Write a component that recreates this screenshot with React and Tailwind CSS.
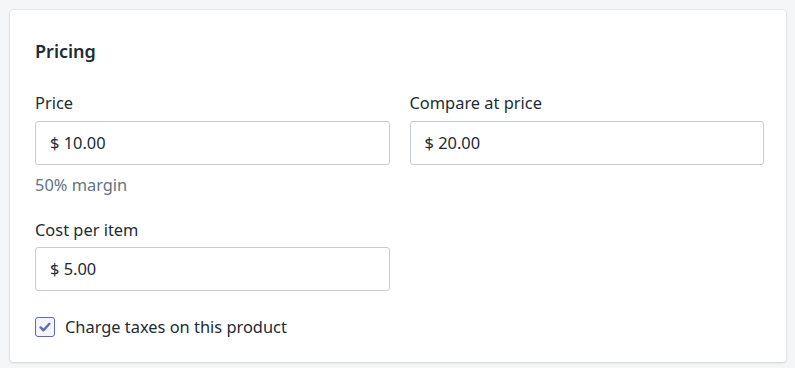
export default function App() {
  const font = { fontFamily: '"Noto Sans", "Open Sans", Arial, sans-serif' };
  return (
    <div className="min-h-[368px] w-[795px] bg-[#f4f6f8] pt-[10px] pl-[10px]" style={font}>
      <div className="w-[776px] h-[352px] bg-white rounded-[4px] shadow-[0_0_0_1px_rgba(63,63,68,0.05),0_1px_3px_0_rgba(63,63,68,0.15)] px-[25px] pt-[29px] text-[#212b36]">
        <h2 className="text-[18px] font-semibold leading-[24px]">Pricing</h2>
        <div className="mt-[28px] grid grid-cols-2 gap-x-[20px] w-[729px]">
          <div>
            <label className="block text-[16.4px] leading-[24px] mb-[6px]">Price</label>
            <div className="h-[44px] border border-[#c4cdd5] rounded-[3px] flex items-center px-[14px] text-[16.4px]">
              $ 10.00
            </div>
            <p className="mt-[8px] text-[16.4px] leading-[24px] text-[#637381]">50% margin</p>
          </div>
          <div>
            <label className="block text-[16.4px] leading-[24px] mb-[6px]">Compare at price</label>
            <div className="h-[44px] border border-[#c4cdd5] rounded-[3px] flex items-center px-[14px] text-[16.4px]">
              $ 20.00
            </div>
          </div>
        </div>
        <div className="mt-[21px] w-[355px]">
          <label className="block text-[16.4px] leading-[24px] mb-[5px]">Cost per item</label>
          <div className="h-[44px] border border-[#c4cdd5] rounded-[3px] flex items-center px-[14px] text-[16.4px]">
            $ 5.00
          </div>
        </div>
        <div className="mt-[24px] flex items-center gap-[10px]">
          <span className="w-[20px] h-[20px] rounded-[3px] border-[1.5px] border-[#5c6ac4] bg-[#f4f5fa] flex items-center justify-center">
            <svg width="16" height="16" viewBox="0 0 20 20" fill="none">
              <path d="M4.5 10.5l3.6 3.6L15.5 6" stroke="#5c6ac4" strokeWidth="3" strokeLinecap="round" strokeLinejoin="round" />
            </svg>
          </span>
          <span className="text-[16.4px] leading-[24px]">Charge taxes on this product</span>
        </div>
      </div>
    </div>
  );
}
